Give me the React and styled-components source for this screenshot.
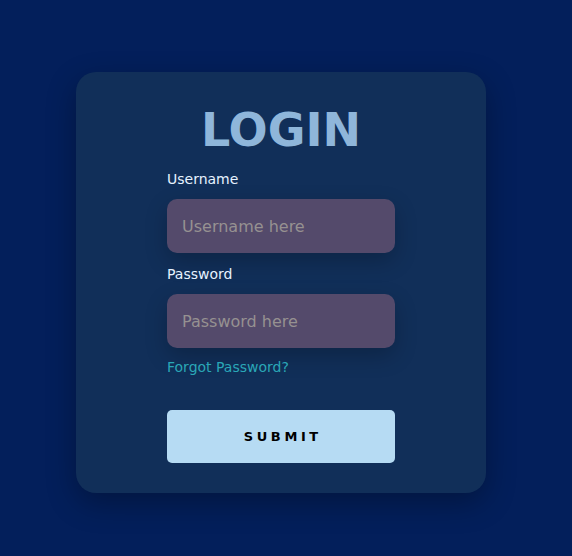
import { createGlobalStyle } from "styled-components";
import styled from "styled-components";

const GlobalStyle = createGlobalStyle`
  body {
    margin: 0;
    background-color: #031f5b;
    font-family: "DejaVu Sans", "Open Sans", sans-serif;
  }
`;

const App = () => {
  const handleSubmit = (e) => {
    e.preventDefault();
  };

  return (
    <Page>
      <GlobalStyle />
      <Card>
        <Title>LOGIN</Title>
        <Form onSubmit={handleSubmit}>
          <Label htmlFor="username">Username</Label>
          <Input id="username" type="text" placeholder="Username here" />
          <Label htmlFor="password" $spaced>Password</Label>
          <Input id="password" type="password" placeholder="Password here" />
          <Forgot href="#">Forgot Password?</Forgot>
          <Button type="submit">SUBMIT</Button>
        </Form>
      </Card>
    </Page>
  );
};

export default App;

const Page = styled.div`
  min-height: 556px;
  box-sizing: border-box;
  display: flex;
  justify-content: center;
  align-items: flex-start;
  padding: 72px 10px 0 0;
`;

const Card = styled.div`
  width: 410px;
  box-sizing: border-box;
  padding: 36px 0 30px;
  background-color: #112f59;
  border-radius: 20px;
  box-shadow: 0 10px 30px rgba(0, 0, 0, 0.3);
  display: flex;
  flex-direction: column;
  align-items: center;
`;

const Title = styled.h1`
  margin: 0 0 19px;
  font-size: 46px;
  line-height: 44px;
  font-weight: 700;
  color: #8fb6da;
`;

const Form = styled.form`
  width: 228px;
  display: flex;
  flex-direction: column;
`;

const Label = styled.label`
  font-size: 14px;
  line-height: 17px;
  color: #e6f2ff;
  margin-top: ${(p) => (p.$spaced ? "13px" : "0")};
  margin-bottom: 11px;
`;

const Input = styled.input`
  height: 54px;
  box-sizing: border-box;
  padding: 0 15px;
  border: none;
  border-radius: 10px;
  background-color: #544a6b;
  color: #e6f2ff;
  font-family: inherit;
  font-size: 16px;
  box-shadow: 0 8px 22px rgba(0, 0, 0, 0.22);

  &::placeholder {
    color: #969191;
  }

  &:focus {
    outline: none;
  }
`;

const Forgot = styled.a`
  margin-top: 11px;
  font-size: 14px;
  line-height: 17px;
  color: #2aa7b7;
  text-decoration: none;
  align-self: flex-start;
`;

const Button = styled.button`
  margin-top: 34px;
  height: 53px;
  border: none;
  border-radius: 5px;
  background-color: #b6dbf3;
  color: #000;
  font-family: inherit;
  font-size: 13px;
  font-weight: 700;
  letter-spacing: 3.6px;
  padding: 0 0 0 3.6px;
  cursor: pointer;
`;
